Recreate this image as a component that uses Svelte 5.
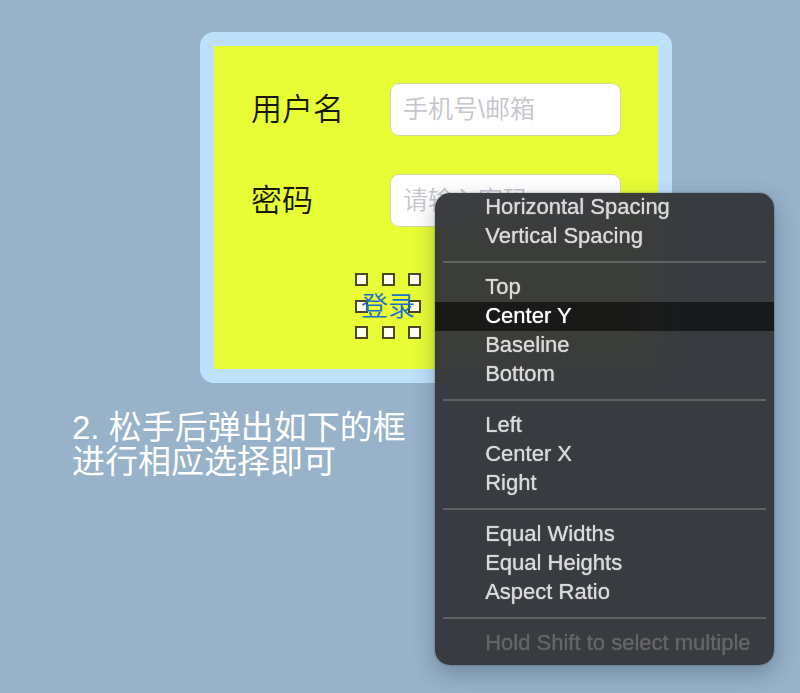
<script>
  const groups = [
    ['Horizontal Spacing', 'Vertical Spacing'],
    ['Top', 'Center Y', 'Baseline', 'Bottom'],
    ['Left', 'Center X', 'Right'],
    ['Equal Widths', 'Equal Heights', 'Aspect Ratio']
  ];
  let active = $state('Center Y');
</script>

<main>
  <div class="stage">
    <form class="card" onsubmit={(e) => e.preventDefault()}>
      <div class="row">
        <label for="user">用户名</label>
        <input id="user" type="text" placeholder="手机号\邮箱" />
      </div>
      <div class="row">
        <label for="pass">密码</label>
        <input id="pass" type="password" placeholder="请输入密码" />
      </div>
      <button class="login" type="submit">
        登录
        <span class="handles" aria-hidden="true">
          {#each Array(9) as _, i}
            <i class:hollow={i === 4}></i>
          {/each}
        </span>
      </button>
    </form>

    <div class="menu" role="menu">
      {#each groups as group}
        {#each group as item}
          <button
            type="button"
            role="menuitem"
            class:active={active === item}
            onclick={() => (active = item)}>{item}</button>
        {/each}
        <hr />
      {/each}
      <button type="button" role="menuitem" disabled>Hold Shift to select multiple</button>
    </div>
  </div>

  <p class="note">2. 松手后弹出如下的框<br />进行相应选择即可</p>
</main>

<style>
  :global(body) {
    background: #97b2c9;
  }
  main {
    box-sizing: border-box;
    min-height: 100vh;
    padding-top: 32px;
    font-family: "Liberation Sans", "Noto Sans CJK SC", sans-serif;
  }
  .stage {
    position: relative;
  }
  .card {
    box-sizing: border-box;
    display: flex;
    flex-direction: column;
    gap: 38px;
    width: 59%;
    margin-left: 25%;
    padding: 37px 37px 30px;
    border: 14px solid #bde0fb;
    border-radius: 14px;
    background: #e8fd35;
  }
  .row {
    display: flex;
    align-items: center;
    justify-content: space-between;
  }
  label {
    font-size: 31px;
    line-height: 53px;
    font-weight: 350;
    color: #161a08;
  }
  input {
    box-sizing: border-box;
    width: 231px;
    height: 53px;
    padding: 0 12px;
    border: 1px solid #d3d8a0;
    border-radius: 9px;
    background: #fff;
    font: 350 25px "Liberation Sans", "Noto Sans CJK SC", sans-serif;
    color: #222;
    outline: none;
  }
  input::placeholder {
    color: #c5c5cb;
    opacity: 1;
  }
  button {
    border: 0;
    background: none;
    font-family: inherit;
    cursor: default;
  }
  .login {
    position: relative;
    isolation: isolate;
    align-self: center;
    width: 66px;
    height: 66px;
    margin: 8px 96px 0 0;
    padding: 0 0 4px;
    font-size: 27px;
    font-weight: 350;
    white-space: nowrap;
    color: #1d73c9;
  }
  .handles {
    position: absolute;
    inset: 0;
    z-index: -1;
    display: grid;
    grid-template-columns: repeat(3, 13px);
    grid-template-rows: repeat(3, 13px);
    place-content: space-between;
  }
  .handles i {
    box-sizing: border-box;
    border: 2px solid #4c4a22;
    background: #fffff0;
  }
  .handles .hollow {
    visibility: hidden;
  }
  .menu {
    position: absolute;
    top: 161px;
    left: 54.4%;
    box-sizing: border-box;
    width: 339px;
    padding-bottom: 7px;
    border-radius: 15px;
    background: rgba(53, 55, 58, 0.97);
    box-shadow: 0 8px 22px rgba(20, 40, 60, 0.3), 0 0 2px rgba(20, 30, 40, 0.5);
    backdrop-filter: blur(14px);
  }
  .menu button {
    display: block;
    width: 100%;
    height: 29px;
    padding: 0 0 1px 50px;
    font-size: 22px;
    line-height: 28px;
    text-align: left;
    text-shadow: 0 0 1px currentColor;
    white-space: nowrap;
    color: #dadada;
  }
  .menu .active {
    background: rgba(0, 0, 0, 0.56);
    color: #fff;
  }
  .menu button:disabled {
    color: #656568;
  }
  hr {
    height: 2px;
    margin: 10px 8px;
    border: 0;
    background: #606163;
  }
  .note {
    margin: 28px 0 0 9%;
    font-size: 33px;
    line-height: 34px;
    color: #fff;
  }
</style>
